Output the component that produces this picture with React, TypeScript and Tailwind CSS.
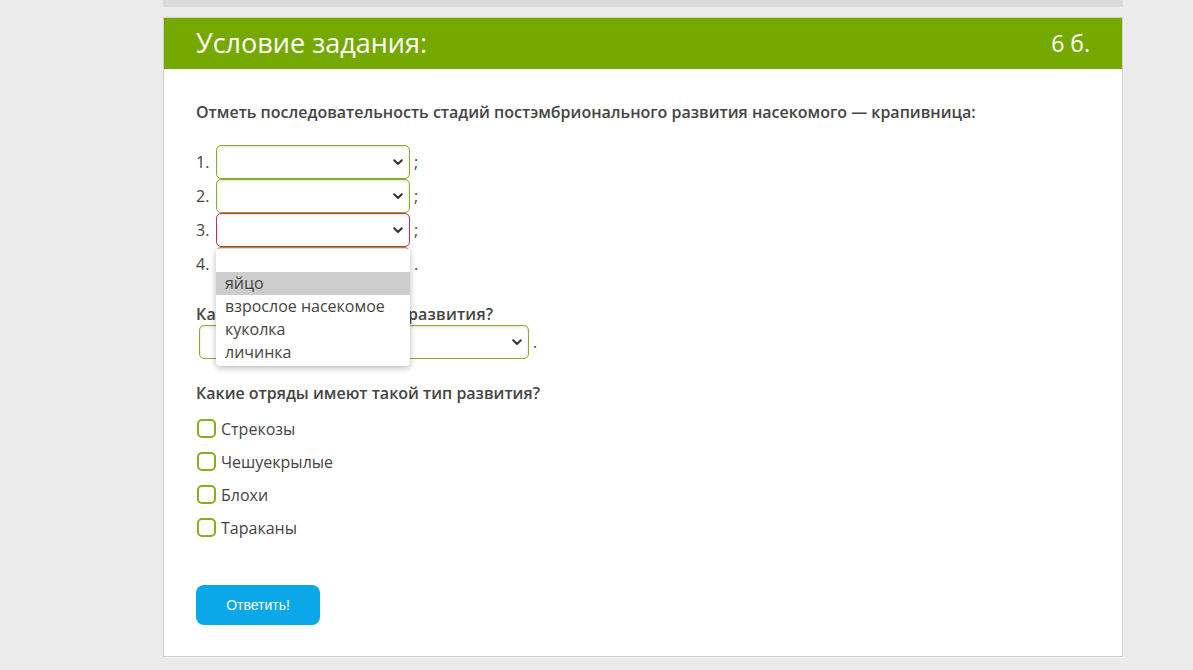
const font = { fontFamily: '"Open Sans", "Noto Sans", sans-serif' };

function Chevron() {
  return (
    <svg width="10" height="7" viewBox="0 0 10 7" className="shrink-0">
      <path d="M1.2 1.3 L5 5 L8.8 1.3" fill="none" stroke="#333" strokeWidth="2" strokeLinecap="round" strokeLinejoin="round" />
    </svg>
  );
}

function FakeSelect({ width, focused }: { width: string; focused?: boolean }) {
  return (
    <div
      className={`${width} h-[34px] rounded-[5px] border bg-white flex items-center justify-end pr-[6px] shadow-[inset_0_1px_3px_rgba(0,0,0,0.12)] ${
        focused ? "border-[#c3325c]" : "border-[#86ae22]"
      }`}
    >
      <Chevron />
    </div>
  );
}

const options = ["", "яйцо", "взрослое насекомое", "куколка", "личинка"];

function Row({ n, end, focused, open }: { n: number; end: string; focused?: boolean; open?: boolean }) {
  return (
    <div className="flex items-center h-[34px]">
      <span className="w-[20px]">{n}.</span>
      <div className="relative">
        <FakeSelect width="w-[194px]" focused={focused} />
        {open && (
          <div className="absolute left-0 top-[36px] z-10 w-[194px] bg-white rounded-b-[4px] shadow-[0_2px_6px_rgba(0,0,0,0.28)] pb-[2px]">
            {options.map((o, i) => (
              <div
                key={i}
                className={`h-[23px] leading-[22px] pl-[9px] text-[16px] text-[#444] ${i === 1 ? "bg-[#cdcdcd]" : ""}`}
              >
                {o}
              </div>
            ))}
          </div>
        )}
      </div>
      <span className="ml-[4px]">{end}</span>
    </div>
  );
}

const orders = ["Стрекозы", "Чешуекрылые", "Блохи", "Тараканы"];

export default function App() {
  return (
    <div className="min-h-[670px] w-full bg-[#ebebeb]" style={font}>
      <div className="ml-[163px] w-[960px]">
        <div className="h-[7px] bg-[#dadada]" />
        <div className="mt-[10px] bg-white border border-[#cdcdcd] shadow-[1px_1px_0_#f5f5f5]">
          {/* Header */}
          <div className="h-[51px] bg-[#76a900] flex items-center justify-between pl-[32px] pr-[32px] text-white">
            <span className="text-[27px]">Условие задания:</span>
            <span className="text-[23px]">6 б.</span>
          </div>

          {/* Body */}
          <div className="px-[32px] pt-[31px] pb-[31px] text-[16px] text-[#444]">
            <p className="font-semibold leading-[24px]">
              Отметь последовательность стадий постэмбрионального развития насекомого — крапивница:
            </p>

            <div className="mt-[21px] flex flex-col">
              <Row n={1} end=";" />
              <Row n={2} end=";" />
              <Row n={3} end=";" focused open />
              <Row n={4} end="." />
            </div>

            <p className="mt-[21px] font-semibold leading-[24px] tracking-[0.2px]">Какой у крапивницы тип развития?</p>
            <div className="flex items-center mt-[-1px] pl-[3px]">
              <FakeSelect width="w-[330px]" />
              <span className="ml-[4px]">.</span>
            </div>

            <p className="mt-[22px] font-semibold leading-[24px]">Какие отряды имеют такой тип развития?</p>
            <div className="mt-[14px] flex flex-col gap-[14px]">
              {orders.map((o) => (
                <label key={o} className="flex items-center h-[19px] pl-[1px]">
                  <span className="w-[19px] h-[19px] rounded-[5px] border-2 border-[#86ae22] bg-white" />
                  <span className="ml-[5px]">{o}</span>
                </label>
              ))}
            </div>

            <button
              className="mt-[48px] w-[124px] h-[40px] rounded-[8px] bg-[#0aa8e8] text-white text-[14px]"
              style={{ fontFamily: '"Liberation Sans", Arial, sans-serif' }}
            >
              Ответить!
            </button>
          </div>
        </div>
      </div>
    </div>
  );
}
